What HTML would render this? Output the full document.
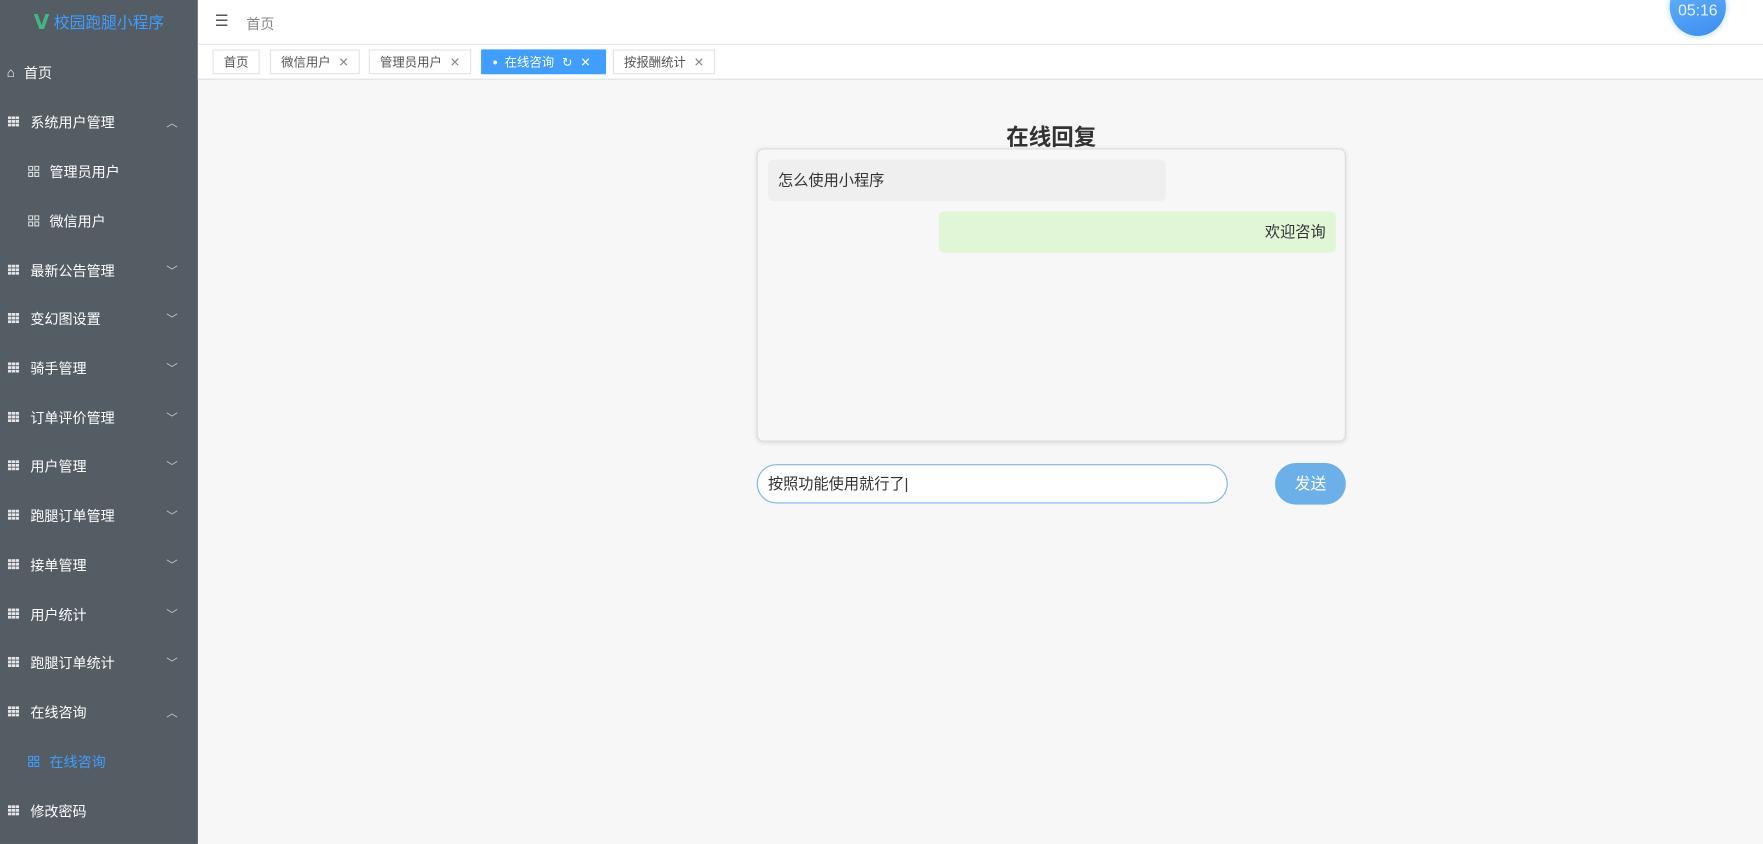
<!DOCTYPE html>
<html><head><meta charset="utf-8"><style>
*{margin:0;padding:0;box-sizing:border-box}
html,body{width:1763px;height:844px;overflow:hidden;background:#f7f7f7;font-family:"Liberation Sans","Noto Sans CJK SC",sans-serif}
#w{width:1568px;height:751px;transform:scale(1.12436,1.1238);transform-origin:0 0;position:relative}
.side{position:absolute;left:0;top:0;width:176px;height:751px;background:#545c64;color:#fff}
.logo{height:40px;display:flex;align-items:center;justify-content:center;color:#409eff;font-size:14px}
.logo b{color:#41b883;font-size:18px;margin-right:4px;font-family:"DejaVu Sans",sans-serif}
.mi{position:absolute;left:0;width:176px;font-size:12.5px;display:flex;align-items:center;transform:translateY(-50%)}
.mi svg.ic{margin:0 10px 0 7px}
.mi .ar{position:absolute;right:18px;font-size:10px;color:#ccc}
.sub{padding-left:25px}
.sub svg{margin-right:9px}
.top{position:absolute;left:176px;right:0;top:0;height:40px;background:#fff;border-bottom:1px solid #e6e6e6}
.tabs{position:absolute;left:176px;right:0;top:40px;height:31px;background:#fff;border-bottom:1px solid #e0e0e0}
.tab{position:absolute;top:4px;height:22px;border:1px solid #e4e4e4;font-size:11px;color:#555;display:flex;align-items:center;padding:0 9px;background:#fff}
.tab i{font-style:normal;margin-left:7px;color:#888}
.clock{position:absolute;left:1485px;top:-20px;width:50px;height:52px;border-radius:50%;background:linear-gradient(160deg,#6cb6ff,#3a8ef0);box-shadow:0 0 4px 2px #d8ecfb;color:#e8f3ff;font-size:14px;text-align:center;padding-top:21px}
h2{position:absolute;left:835px;width:200px;top:106px;text-align:center;font-size:20px;color:#333}
.box{position:absolute;left:673px;top:132px;width:524px;height:261px;border:1px solid #ddd;border-radius:6px;background:#f7f7f7;box-shadow:0 1px 4px rgba(0,0,0,.12)}
.b{position:absolute;height:37px;border-radius:5px;font-size:13.5px;color:#333;line-height:37px;padding:0 9px}
.inp{position:absolute;left:673px;top:413px;width:419px;height:35px;border:1px solid #79b6f0;border-radius:18px;background:#fff;font-size:13.5px;color:#333;line-height:33px;padding-left:9px}
.btn{position:absolute;left:1134px;top:412px;width:63px;height:37px;border-radius:19px;background:#6cb0ea;color:#fff;font-size:14px;text-align:center;line-height:37px}
</style></head><body><div id="w">
<svg width="0" height="0" style="position:absolute"><defs>
<g id="g"><rect x="0" y="0" width="3" height="2.5" fill="#e6e6e6"/><rect x="3.5" y="0" width="3" height="2.5" fill="#e6e6e6"/><rect x="7" y="0" width="3" height="2.5" fill="#e6e6e6"/><rect x="0" y="3.3" width="3" height="2.5" fill="#e6e6e6"/><rect x="3.5" y="3.3" width="3" height="2.5" fill="#e6e6e6"/><rect x="7" y="3.3" width="3" height="2.5" fill="#e6e6e6"/><rect x="0" y="6.6" width="3" height="2.5" fill="#e6e6e6"/><rect x="3.5" y="6.6" width="3" height="2.5" fill="#e6e6e6"/><rect x="7" y="6.6" width="3" height="2.5" fill="#e6e6e6"/></g>
<g id="s" fill="none" stroke-width="1"><rect x="0.5" y="0.5" width="3.5" height="3.5"/><rect x="6" y="0.5" width="3.5" height="3.5"/><rect x="0.5" y="6" width="3.5" height="3.5"/><rect x="6" y="6" width="3.5" height="3.5"/></g>
</defs></svg>
<div class="side">
<div class="logo"><b>V</b>校园跑腿小程序</div>
<div class="mi" style="top:64px"><span style="margin:0 8px 0 6px;font-size:12px">⌂</span>首页</div>
<div class="mi" style="top:108px"><svg class="ic" width="10" height="9"><use href="#g"/></svg>系统用户管理<span class="ar">︿</span></div>
<div class="mi sub" style="top:152px"><svg width="10" height="10" stroke="#ddd"><use href="#s"/></svg>管理员用户</div>
<div class="mi sub" style="top:196px"><svg width="10" height="10" stroke="#ddd"><use href="#s"/></svg>微信用户</div>
<div class="mi" style="top:240px"><svg class="ic" width="10" height="9"><use href="#g"/></svg>最新公告管理<span class="ar">﹀</span></div>
<div class="mi" style="top:283px"><svg class="ic" width="10" height="9"><use href="#g"/></svg>变幻图设置<span class="ar">﹀</span></div>
<div class="mi" style="top:327px"><svg class="ic" width="10" height="9"><use href="#g"/></svg>骑手管理<span class="ar">﹀</span></div>
<div class="mi" style="top:371px"><svg class="ic" width="10" height="9"><use href="#g"/></svg>订单评价管理<span class="ar">﹀</span></div>
<div class="mi" style="top:414px"><svg class="ic" width="10" height="9"><use href="#g"/></svg>用户管理<span class="ar">﹀</span></div>
<div class="mi" style="top:458px"><svg class="ic" width="10" height="9"><use href="#g"/></svg>跑腿订单管理<span class="ar">﹀</span></div>
<div class="mi" style="top:502px"><svg class="ic" width="10" height="9"><use href="#g"/></svg>接单管理<span class="ar">﹀</span></div>
<div class="mi" style="top:546px"><svg class="ic" width="10" height="9"><use href="#g"/></svg>用户统计<span class="ar">﹀</span></div>
<div class="mi" style="top:589px"><svg class="ic" width="10" height="9"><use href="#g"/></svg>跑腿订单统计<span class="ar">﹀</span></div>
<div class="mi" style="top:633px"><svg class="ic" width="10" height="9"><use href="#g"/></svg>在线咨询<span class="ar">︿</span></div>
<div class="mi sub" style="top:677px;color:#409eff"><svg width="10" height="10" stroke="#409eff"><use href="#s"/></svg>在线咨询</div>
<div class="mi" style="top:721px"><svg class="ic" width="10" height="9"><use href="#g"/></svg>修改密码</div>
</div>
<div class="top"><span style="position:absolute;left:15px;top:10px;font-size:14px;color:#555">☰</span><span style="position:absolute;left:43px;top:11px;font-size:12.5px;color:#888">首页</span></div>
<div class="tabs">
<div class="tab" style="left:13px">首页</div>
<div class="tab" style="left:64px">微信用户<i>✕</i></div>
<div class="tab" style="left:152px">管理员用户<i>✕</i></div>
<div class="tab" style="left:252px;width:111px;background:#409eff;border-color:#409eff;color:#fff"><span style="font-size:8px;margin-right:6px">●</span>在线咨询<i style="color:#fff">↻</i><i style="color:#fff">✕</i></div>
<div class="tab" style="left:369px">按报酬统计<i>✕</i></div>
</div>
<div class="clock">05:16</div>
<h2>在线回复</h2>
<div class="box">
<div class="b" style="left:9px;top:9px;width:354px;background:#efefef">怎么使用小程序</div>
<div class="b" style="left:161px;top:55px;width:353px;background:#e1f6d7;text-align:right">欢迎咨询</div>
</div>
<div class="inp">按照功能使用就行了|</div>
<div class="btn">发送</div>
</div></body></html>
